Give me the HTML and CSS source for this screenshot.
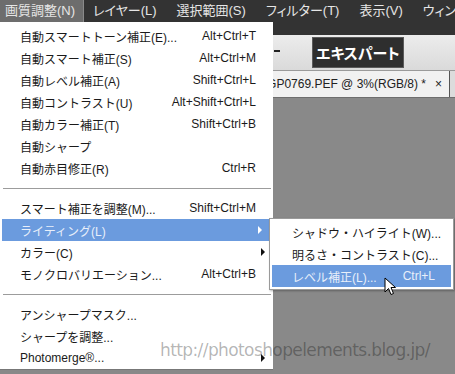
FILE: index.html
```html
<!DOCTYPE html>
<html lang="ja">
<head>
    <meta charset="UTF-8">
    <title>画質調整メニュー</title>
    <link rel="stylesheet" href="styles.css">
</head>
<body>

<div class="screen">
    <header class="menubar">
        <ul class="menubar-items">
            <li class="active">画質調整(N)</li>
            <li>レイヤー(L)</li>
            <li>選択範囲(S)</li>
            <li>フィルター(T)</li>
            <li>表示(V)</li>
            <li>ウィンドウ(W)</li>
        </ul>
    </header>

    <div class="toolbar">
        <span class="grip"></span>
        <span class="expert">エキスパート</span>
    </div>

    <div class="tabbar">
        <div class="doc-tab">
            <span class="doc-name">_IGP0769.PEF @ 3%(RGB/8) *</span>
            <span class="doc-close">×</span>
        </div>
    </div>

    <div class="workspace"></div>

    <!-- 画質調整 dropdown -->
    <ul class="dropdown">
        <li><span>自動スマートトーン補正(E)...</span><span>Alt+Ctrl+T</span></li>
        <li><span>自動スマート補正(S)</span><span>Alt+Ctrl+M</span></li>
        <li><span>自動レベル補正(A)</span><span>Shift+Ctrl+L</span></li>
        <li><span>自動コントラスト(U)</span><span>Alt+Shift+Ctrl+L</span></li>
        <li><span>自動カラー補正(T)</span><span>Shift+Ctrl+B</span></li>
        <li><span>自動シャープ</span></li>
        <li><span>自動赤目修正(R)</span><span>Ctrl+R</span></li>
        <li class="sep"></li>
        <li><span>スマート補正を調整(M)...</span><span>Shift+Ctrl+M</span></li>
        <li class="has-sub selected"><span>ライティング(L)</span><span class="arrow"></span></li>
        <li class="has-sub"><span>カラー(C)</span><span class="arrow"></span></li>
        <li><span>モノクロバリエーション...</span><span>Alt+Ctrl+B</span></li>
        <li class="sep"></li>
        <li><span>アンシャープマスク...</span></li>
        <li><span>シャープを調整...</span></li>
        <li class="has-sub"><span>Photomerge®...</span><span class="arrow"></span></li>
    </ul>

    <!-- ライティング submenu -->
    <ul class="submenu">
        <li><span>シャドウ・ハイライト(W)...</span></li>
        <li><span>明るさ・コントラスト(C)...</span></li>
        <li class="selected"><span>レベル補正(L)...</span><span>Ctrl+L</span></li>
    </ul>

    <div class="watermark">http://photoshopelements.blog.jp/</div>

    <svg class="cursor" width="13" height="20" viewBox="0 0 13 20">
        <path d="M1 1 L1 15 L4.5 11.5 L7 17.5 L9.5 16.5 L7 10.5 L11.5 10.5 Z" fill="#fff" stroke="#000" stroke-width="1" stroke-linejoin="round"/>
    </svg>
</div>

</body>
</html>
```

FILE: styles.css
```css
body {
    margin: 0;
    background-color: #898989;
    font-family: "Liberation Sans", "Noto Sans CJK JP", sans-serif;
}
ul {
    list-style: none;
    margin: 0;
    padding: 0;
}
.screen {
    position: relative;
    width: 455px;
    height: 374px;
    overflow: hidden;
    display: flex;
    flex-direction: column;
}

/* top menu bar */
.menubar {
    height: 35px;
    background-color: #333333;
    overflow: hidden;
}
.menubar-items {
    display: flex;
    height: 22px;
    font-size: 13px;
    color: #e6e6e6;
    font-feature-settings: "palt";
}
.menubar-items li {
    padding: 0 11px 0 9px;
    line-height: 22px;
    white-space: nowrap;
}
.menubar-items li.active {
    padding: 0 8px 0 5px;
    background-color: #6d6d6d;
    border-right: 1px solid #8a8a8a;
}

/* expert toolbar */
.toolbar {
    height: 35px;
    display: flex;
    align-items: center;
    padding-left: 274px;
    background: linear-gradient(#ececec, #dadada);
}
.grip {
    width: 6px;
    height: 3px;
    border-top: 2px solid #222;
    margin-right: 32px;
}
.expert {
    padding: 3px 3px;
    background-color: #2e2e2e;
    border: 1px solid #5a5a5a;
    color: #ffffff;
    font-size: 15px;
    font-weight: bold;
    line-height: 23px;
    font-family: "Noto Sans CJK JP", sans-serif;
    font-feature-settings: "palt";
}

/* document tab */
.tabbar {
    height: 26px;
    display: flex;
    justify-content: flex-end;
    background-color: #dcdcdc;
    border-top: 1px solid #9a9a9a;
    border-bottom: 1px solid #6e6e6e;
    padding-right: 5px;
}
.doc-tab {
    display: flex;
    align-items: center;
    gap: 9px;
    padding: 0 7px 0 10px;
    background-color: #f1f1f1;
    border-right: 1px solid #555;
    font-size: 12px;
    color: #222;
    white-space: nowrap;
}
.doc-close {
    font-size: 12px;
}
.workspace {
    flex: 1;
    background-color: #898989;
}

/* dropdown menus */
.dropdown {
    position: absolute;
    top: 22px;
    left: 0;
    width: 273px;
    height: 348px;
    box-sizing: border-box;
    padding-top: 3px;
    background-color: #ffffff;
    border-bottom: 1px solid #777;
    font-size: 12px;
    color: #1a1a1a;
}
.dropdown li,
.submenu li {
    display: flex;
    justify-content: space-between;
    align-items: center;
    height: 22px;
    padding: 0 17px 0 20px;
    white-space: nowrap;
}
.dropdown li.has-sub {
    padding-right: 8px;
}
.dropdown li.selected,
.submenu li.selected {
    background-color: #6b9bde;
    color: #e8effa;
    margin: 0 3px 0 2px;
    padding-left: 18px;
}
.dropdown li.sep {
    height: 18px;
    padding: 0;
    margin: 0 2px 0 3px;
}
.dropdown li.sep::after {
    content: "";
    flex: 1;
    border-top: 1px solid #9c9c9c;
}
.arrow {
    width: 0;
    height: 0;
    border-top: 4px solid transparent;
    border-bottom: 4px solid transparent;
    border-left: 4px solid #111;
}
.selected .arrow {
    border-left-color: #ffffff;
}

.submenu {
    position: absolute;
    top: 218px;
    left: 269px;
    width: 185px;
    box-sizing: border-box;
    padding: 2px 1px;
    background-color: #ffffff;
    border: 1px solid #9a9a9a;
    box-shadow: 1px 1px 2px rgba(0, 0, 0, 0.3);
    font-size: 12px;
    color: #1a1a1a;
}
.submenu li {
    padding: 0 16px 0 21px;
}
.submenu li.selected {
    margin: 0 1px 0 1px;
    padding-left: 20px;
}

.watermark {
    position: absolute;
    left: 160px;
    top: 340px;
    font-size: 17px;
    color: rgba(0, 0, 0, 0.3);
    font-family: "DejaVu Sans", sans-serif;
    letter-spacing: -0.6px;
}
.cursor {
    position: absolute;
    left: 384px;
    top: 277px;
}
```
